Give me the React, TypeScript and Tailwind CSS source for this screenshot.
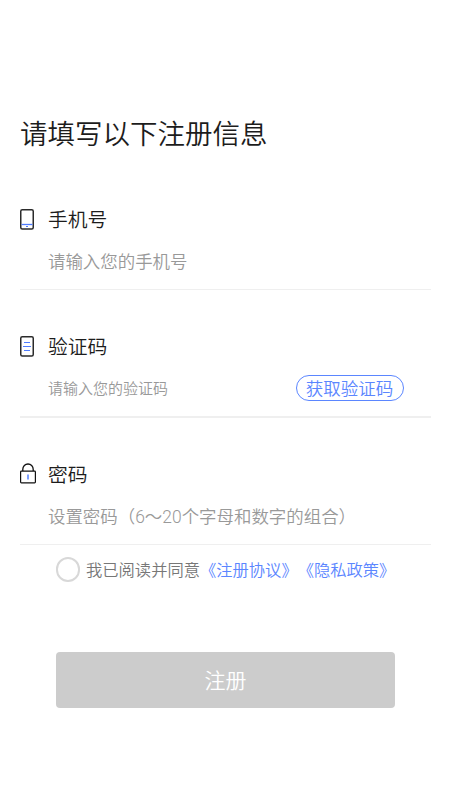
import { useState, type ReactNode } from 'react';

function PhoneIcon() {
  return (
    <svg className="w-[14px] h-[21px]" viewBox="0 0 14 21" fill="none">
      <rect x="0.75" y="0.75" width="12.5" height="19.3" rx="1.5" stroke="#2b2b2b" strokeWidth="1.5" />
      <path d="M1.5 15.5h11" stroke="#4f7cff" strokeWidth="1.3" />
      <path d="M6 17.5h2" stroke="#4f7cff" />
    </svg>
  );
}

function CodeIcon() {
  return (
    <svg className="w-[14px] h-[21px]" viewBox="0 0 14 21" fill="none">
      <rect x="0.75" y="0.75" width="12.5" height="19.3" rx="1.5" stroke="#2b2b2b" strokeWidth="1.5" />
      <path d="M4 6.5h6M3 10.5h8M4 14.5h6" stroke="#4f7cff" strokeWidth="1.2" />
    </svg>
  );
}

function LockIcon() {
  return (
    <svg className="w-[16px] h-[21px] -mt-[2px]" viewBox="0 0 16 21" fill="none">
      <path d="M2.8 8V6.2a5.2 5.2 0 0 1 10.4 0V8" stroke="#111" strokeWidth="1.3" />
      <rect x="0.6" y="8.1" width="14.8" height="11.8" rx="0.8" stroke="#111" strokeWidth="1.2" />
      <path d="M8 11.5v5" stroke="#7da0ff" strokeWidth="2" />
    </svg>
  );
}

interface FieldProps {
  icon: ReactNode;
  label: string;
  className: string;
  children: ReactNode;
}

function Field({ icon, label, className, children }: FieldProps) {
  return (
    <div className={`border-[#efefef] ${className}`}>
      <div className="flex items-center h-[31px]">
        <div className="w-7">{icon}</div>
        <label className="pt-[2px] text-[19.8px] leading-none text-[#1c1c1c]">{label}</label>
      </div>
      <div className="flex items-center justify-between h-[54px] pl-7">{children}</div>
    </div>
  );
}

export default function App() {
  const [agreed, setAgreed] = useState(false);

  return (
    <div className="min-h-[801px] bg-white px-5 pt-[114px] font-[350] font-['Roboto','Noto_Sans_CJK_SC',sans-serif]">
      <h1 className="h-10 text-[27.5px] font-[350] leading-[41px] text-[#1c1c1c] whitespace-nowrap">请填写以下注册信息</h1>

      <form className="mt-[50px]" onSubmit={(e) => e.preventDefault()}>
        <Field icon={<PhoneIcon />} label="手机号" className="border-b">
          <input
            className="w-full text-[17.45px] text-[#1c1c1c] placeholder:text-[#999999] outline-none"
            placeholder="请输入您的手机号"
          />
        </Field>

        <Field icon={<CodeIcon />} label="验证码" className="mt-[41px] border-b-2">
          <input
            className="w-[200px] text-[15px] text-[#1c1c1c] placeholder:text-[#999999] outline-none"
            placeholder="请输入您的验证码"
          />
          <button
            type="button"
            className="mr-[27px] mb-[2px] pt-[3px] pr-px flex items-center justify-center w-[108px] h-[26px] rounded-full border border-[#5b86ff] text-[17.5px] leading-none text-[#5b86ff]"
          >
            获取验证码
          </button>
        </Field>

        <Field icon={<LockIcon />} label="密码" className="mt-[41px] border-b">
          <input
            type="password"
            className="w-full text-[17.45px] text-[#1c1c1c] placeholder:text-[#999999] outline-none"
            placeholder="设置密码（6～20个字母和数字的组合）"
          />
        </Field>

        {/* Agreement */}
        <div className="flex items-center h-[50px] pl-9 text-[16.3px] leading-none whitespace-nowrap">
          <button
            type="button"
            aria-pressed={agreed}
            onClick={() => setAgreed(!agreed)}
            className={`w-6 h-[25px] mb-px mr-[6px] rounded-full border-2 border-[#d8d8d8] ${agreed ? 'bg-[#5b86ff]' : 'bg-white'}`}
          />
          <span className="pt-[2px] text-[#777777]">我已阅读并同意</span>
          <a className="pt-[2px] text-[#5b86ff]">《注册协议》</a>
          <a className="pt-[2px] text-[#5b86ff]">《隐私政策》</a>
        </div>

        <button
          type="submit"
          className="mt-[57px] mx-9 pt-[2px] flex items-center justify-center w-[339px] h-[56px] rounded bg-[#cccccc] text-[21px] leading-none text-white"
        >
          注册
        </button>
      </form>
    </div>
  );
}
